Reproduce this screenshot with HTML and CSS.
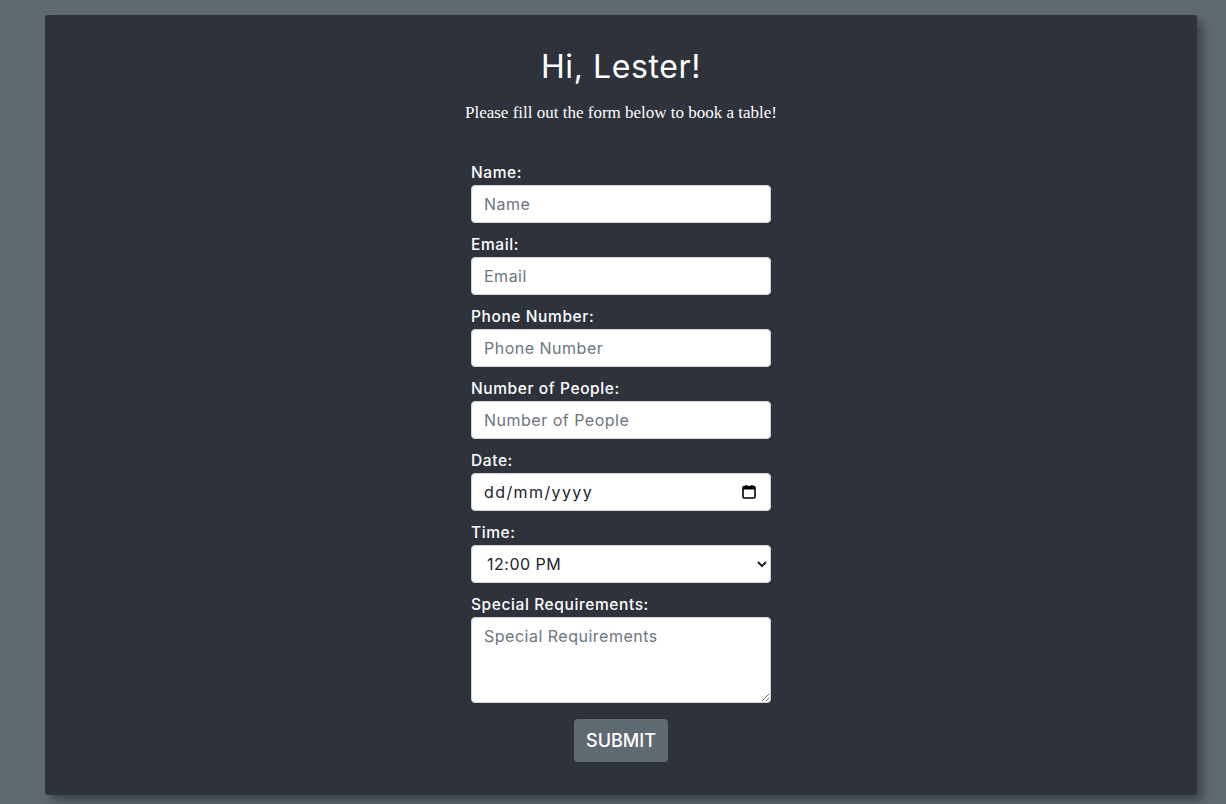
FILE: index.html
```html
<!DOCTYPE html>
<html lang="en-GB">
<head>
<meta charset="utf-8">
<title>Book a table</title>
<link rel="stylesheet" href="styles.css">
</head>
<body>
<main class="card">
  <h1 class="title">Hi, Lester!</h1>
  <p class="subtitle">Please fill out the form below to book a table!</p>
  <form class="form">
    <label class="label" for="name">Name:</label>
    <input class="control" id="name" type="text" placeholder="Name">
    <label class="label" for="email">Email:</label>
    <input class="control" id="email" type="email" placeholder="Email">
    <label class="label" for="phone">Phone Number:</label>
    <input class="control" id="phone" type="tel" placeholder="Phone Number">
    <label class="label" for="people">Number of People:</label>
    <input class="control" id="people" type="number" placeholder="Number of People">
    <label class="label" for="date">Date:</label>
    <div class="date-wrap">
      <input class="control date" id="date" type="text" placeholder="dd/mm/yyyy">
      <svg class="cal" width="14" height="14" viewBox="0 0 14 14" aria-hidden="true">
        <rect x="1" y="1.5" width="12" height="11.5" rx="1.2" fill="none" stroke="#000" stroke-width="1.6"/>
        <rect x="1" y="1.5" width="12" height="3" fill="#000"/>
        <rect x="3.3" y="0" width="1.4" height="2.5" fill="#000"/>
        <rect x="9.3" y="0" width="1.4" height="2.5" fill="#000"/>
      </svg>
    </div>
    <label class="label" for="time">Time:</label>
    <select class="control select" id="time">
      <option>12:00 PM</option>
      <option>12:30 PM</option>
      <option>1:00 PM</option>
    </select>
    <label class="label" for="req">Special Requirements:</label>
    <textarea class="control area" id="req" placeholder="Special Requirements"></textarea>
    <button class="submit" type="button">SUBMIT</button>
  </form>
</main>
</body>
</html>
```
FILE: styles.css
```css
html, body {
  margin: 0;
  padding: 0;
}
body {
  background: #5f6a70;
  font-family: "Inter", "Liberation Sans", sans-serif;
  padding: 15px 29px 9px 45px;
  height: 804px;
  box-sizing: border-box;
}
.card {
  background: #2e323a;
  border-radius: 3px;
  height: 780px;
  box-sizing: border-box;
  box-shadow: 6px 6px 10px rgba(0, 0, 0, 0.35);
  display: flex;
  flex-direction: column;
  align-items: center;
  padding-top: 31px;
}
.title {
  margin: 0;
  color: #fff;
  font-family: "Inter", sans-serif;
  font-weight: 400;
  font-size: 32px;
  line-height: 42px;
  letter-spacing: 0.6px;
}
.subtitle {
  margin: 13px 0 0;
  color: #fff;
  font-family: "Liberation Serif", serif;
  font-size: 17px;
  line-height: 24px;
}
.form {
  margin-top: 36px;
  width: 300px;
  display: flex;
  flex-direction: column;
}
.label {
  color: #fff;
  font-family: "Inter", sans-serif;
  font-weight: 500;
  font-size: 15.5px;
  letter-spacing: 0.6px;
  line-height: 24px;
  height: 24px;
  margin-top: 10px;
}
.label:first-child {
  margin-top: 0;
}
.control {
  box-sizing: border-box;
  width: 300px;
  height: 38px;
  margin: 0;
  border: 1px solid #ced4da;
  border-radius: 4px;
  background: #fff;
  padding: 0 12px;
  font-family: "Inter", sans-serif;
  font-size: 16px;
  letter-spacing: 0.5px;
  color: #212529;
}
.control::placeholder {
  color: #6c757d;
  opacity: 1;
}
.date-wrap {
  position: relative;
  height: 38px;
}
.date {
  letter-spacing: 1.4px;
}
.date::placeholder {
  color: #212529;
}
.cal {
  position: absolute;
  right: 15px;
  top: 12px;
}
.select {
  padding-left: 11px;
  color: #212529;
}
.area {
  height: 86px;
  padding-top: 8px;
  resize: vertical;
}
.submit {
  align-self: center;
  margin-top: 16px;
  width: 94px;
  height: 43px;
  border: none;
  border-radius: 4px;
  background: #5f6a70;
  color: #fff;
  font-family: "Inter", sans-serif;
  font-size: 18px;
  font-weight: 500;
}
```
